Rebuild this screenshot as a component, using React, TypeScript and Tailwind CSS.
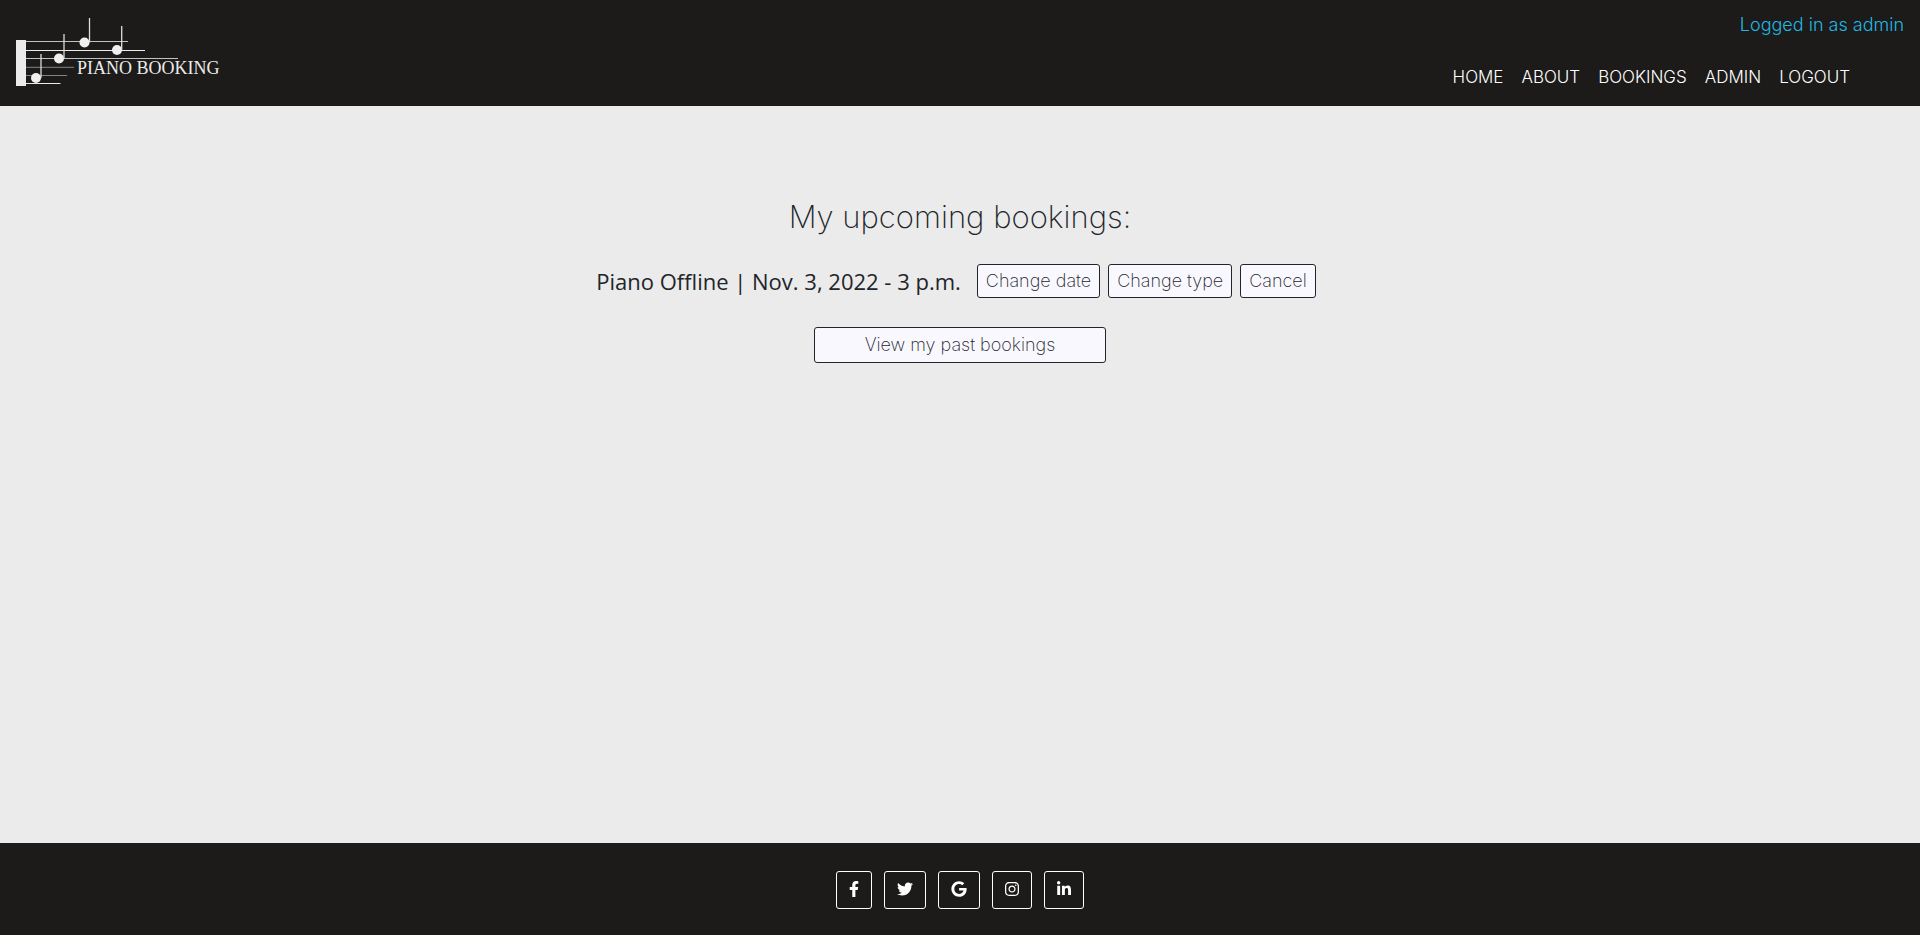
import type { ComponentType } from "react";
import { FaFacebookF, FaTwitter, FaGoogle, FaInstagram, FaLinkedinIn } from "react-icons/fa";

const navItems = ["HOME", "ABOUT", "BOOKINGS", "ADMIN", "LOGOUT"];

const bookings = [{ id: 1, title: "Piano Offline", when: "Nov. 3, 2022 - 3 p.m." }];

const socials: { name: string; Icon: ComponentType<{ className?: string }>; width: string }[] = [
  { name: "Facebook", Icon: FaFacebookF, width: "w-[10px]" },
  { name: "Twitter", Icon: FaTwitter, width: "w-[16px]" },
  { name: "Google", Icon: FaGoogle, width: "w-[16px]" },
  { name: "Instagram", Icon: FaInstagram, width: "w-[14px]" },
  { name: "LinkedIn", Icon: FaLinkedinIn, width: "w-[14px]" },
];

const notes = [
  { x: 36, y: 78, stem: 41, top: 54 },
  { x: 59, y: 58.5, stem: 64, top: 34 },
  { x: 84.5, y: 42.5, stem: 89.5, top: 18 },
  { x: 117, y: 50, stem: 121.7, top: 26 },
];

function Logo() {
  return (
    <svg viewBox="0 0 240 106" className="h-[106px] w-[240px]" role="img" aria-label="Piano Booking">
      <g stroke="#ebebeb" strokeWidth="1">
        <path d="M25 41.5H128" strokeOpacity="0.8" />
        <path d="M25 50.5H145" />
        <path d="M25 58.5H178" strokeOpacity="0.8" />
        <path d="M25 67.3H74" strokeOpacity="0.5" />
        <path d="M25 75.5H67" strokeOpacity="0.5" />
        <path d="M25 83.5H60.5" />
      </g>
      <rect x="16" y="40" width="10" height="46" fill="#ebebeb" />
      {notes.map((n) => (
        <g key={n.x}>
          <circle cx={n.x} cy={n.y} r="5" fill="#f0f0f0" />
          <path d={`M${n.stem} ${n.y}V${n.top}`} stroke="#dedede" strokeWidth="1.3" />
        </g>
      ))}
      <text x="77" y="74" fill="#ebebeb" fontSize="18" fontFamily="'Liberation Serif', serif">
        PIANO BOOKING
      </text>
    </svg>
  );
}

function ActionButton({ label }: { label: string }) {
  return (
    <button
      type="button"
      className="h-[34px] rounded-[3px] border border-[#212529] bg-[#faf8ff] px-2 text-lg leading-6 font-extralight text-[#212529]"
    >
      {label}
    </button>
  );
}

export default function App() {
  return (
    <div className="flex min-h-screen flex-col bg-[#ebebeb] font-['Inter',sans-serif] text-[#212529]">
      <header className="flex min-h-[106px] items-start justify-between bg-[#1c1b19]">
        <a href="#home">
          <Logo />
        </a>
        <div className="flex flex-col items-end gap-7 pr-4 pt-[13px]">
          <p className="text-lg leading-6 font-light text-[#22b8e6]">Logged in as admin</p>
          <nav className="flex gap-[18px] pr-[54px] text-[17px] leading-6 font-light text-white">
            {navItems.map((item) => (
              <a key={item} href={`#${item.toLowerCase()}`}>
                {item}
              </a>
            ))}
          </nav>
        </div>
      </header>

      <main className="flex grow flex-col items-center pt-[93px]">
        <h1 className="text-[31px] leading-9 font-extralight">My upcoming bookings:</h1>
        <ul className="mt-[29px]">
          {bookings.map((booking) => (
            <li key={booking.id} className="flex items-center pr-2">
              <h2 className="mr-4 font-['Open_Sans',sans-serif] text-[22px] leading-8 font-medium">
                {booking.title} | {booking.when}
              </h2>
              <div className="flex gap-2">
                <ActionButton label="Change date" />
                <ActionButton label="Change type" />
                <ActionButton label="Cancel" />
              </div>
            </li>
          ))}
        </ul>
        <button
          type="button"
          className="mt-[29px] h-9 w-[292px] rounded-[3px] border border-[#212529] bg-[#faf8ff] text-lg leading-6 font-extralight text-[#212529]"
        >
          View my past bookings
        </button>
      </main>

      <footer className="flex min-h-[92px] items-start justify-center gap-3 bg-[#1c1b19] pt-7">
        {socials.map(({ name, Icon, width }) => (
          <a
            key={name}
            href={`#${name.toLowerCase()}`}
            aria-label={name}
            className="flex h-[38px] items-center rounded-[3px] border border-white px-3 pb-[2px] text-white"
          >
            <Icon className={`h-4 ${width}`} />
          </a>
        ))}
      </footer>
    </div>
  );
}
